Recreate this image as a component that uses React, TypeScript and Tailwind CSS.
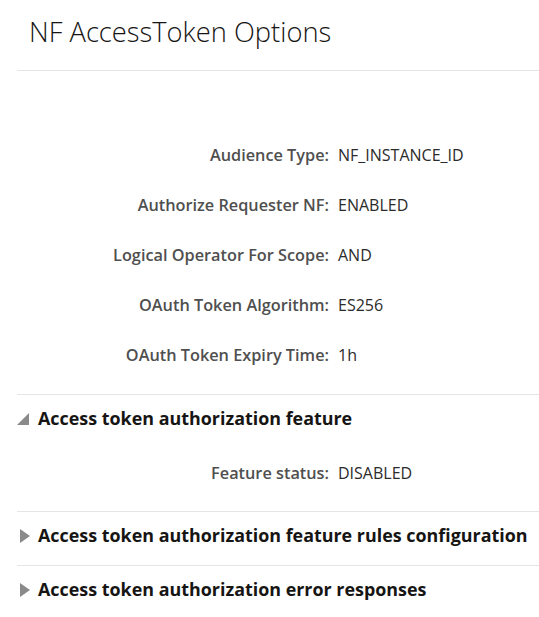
const font = { fontFamily: '"Open Sans", "Noto Sans", sans-serif' };

const props: [string, string][] = [
  ["Audience Type", "NF_INSTANCE_ID"],
  ["Authorize Requester NF", "ENABLED"],
  ["Logical Operator For Scope", "AND"],
  ["OAuth Token Algorithm", "ES256"],
  ["OAuth Token Expiry Time", "1h"],
];

function Row({ label, value }: { label: string; value: string }) {
  return (
    <div className="flex h-[50px] items-center">
      <div className="w-[312px] text-right text-[16.3px] font-semibold text-[#4f4f4f]">{label}:</div>
      <div className="pl-[9px] text-[16px] text-[#2b2b2b]">{value}</div>
    </div>
  );
}

function Section({ title, open, children }: { title: string; open?: boolean; children?: React.ReactNode }) {
  return (
    <div className={`border-t border-[#e5e5e5] ${open ? "" : "pb-[6px]"}`}>
      <div className="flex h-[47px] items-center">
        <div className="flex w-[21px] items-center">
          {open ? (
            <svg width="12" height="12" viewBox="0 0 12 12">
              <polygon points="12,0 12,12 0,12" fill="#8a8a8a" />
            </svg>
          ) : (
            <svg width="10" height="14" viewBox="0 0 10 14" className="ml-[3px]">
              <polygon points="0,0 10,7 0,14" fill="#8a8a8a" />
            </svg>
          )}
        </div>
        <h2 className="text-[17.9px] font-bold text-[#161513]">{title}</h2>
      </div>
      {children}
    </div>
  );
}

export default function App() {
  return (
    <div className="min-h-screen bg-white pl-[17px]" style={font}>
      <div className="flex h-[71px] items-center border-b border-[#e5e5e5] pb-[6px] pl-[12px]">
        <h1 className="text-[27.3px] font-light text-[#161513]">NF AccessToken Options</h1>
      </div>
      <div className="pt-[59px] pb-[14px]">
        {props.map(([l, v]) => (
          <Row key={l} label={l} value={v} />
        ))}
      </div>
      <Section title="Access token authorization feature" open>
        <div className="pt-[6px] pb-[13px]">
          <Row label="Feature status" value="DISABLED" />
        </div>
      </Section>
      <Section title="Access token authorization feature rules configuration" />
      <Section title="Access token authorization error responses" />
    </div>
  );
}
